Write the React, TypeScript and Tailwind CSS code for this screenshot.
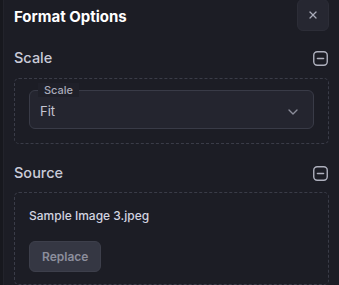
import { ChevronDown, X } from "lucide-react";

function MinusSquare() {
  return (
    <svg width="15" height="15" viewBox="0 0 15 15" fill="none" className="text-[#aeb0bd]">
      <rect x="0.75" y="0.75" width="13.5" height="13.5" rx="3.5" stroke="currentColor" strokeWidth="1.4" />
      <path d="M4.5 7.5h6" stroke="currentColor" strokeWidth="1.6" strokeLinecap="round" />
    </svg>
  );
}

function SectionHeader({ title }: { title: string }) {
  return (
    <div className="flex items-center justify-between h-[20px]">
      <span className="text-[14.5px] font-medium text-[#c9cbd8]">{title}</span>
      <button className="mr-[1px]">
        <MinusSquare />
      </button>
    </div>
  );
}

export default function App() {
  return (
    <main
      className="flex w-[339px] h-[285px] overflow-hidden bg-[#1c1d25]"
      style={{ fontFamily: "Inter, 'Noto Sans', sans-serif" }}
    >
      <div className="w-[4px] shrink-0 bg-[#17181e] border-r border-[#22232b]" />
      <div className="flex-1 flex flex-col pl-[10px] pr-[10px]">
        <div className="flex items-start justify-between h-[48px]">
          <h1 className="mt-[6px] text-[15px] font-bold text-white">Format Options</h1>
          <button className="mt-[-1px] w-[32px] h-[32px] rounded-md bg-[#262731] border border-[#2c2d37] flex items-center justify-center text-[#a9abb8]">
            <X size={12} strokeWidth={2.5} />
          </button>
        </div>

        <SectionHeader title="Scale" />
        <div className="mt-[10px] h-[66px] rounded-[5px] border border-dashed border-[#3a3c48] px-[14px] pt-[11px]">
          <div className="relative h-[39px] rounded-md border border-[#393b47] bg-[#24252f] flex items-center justify-between pl-[10px] pr-[12px] pt-[4px]">
            <span className="absolute left-[8px] top-[-8px] px-[6px] text-[11px] font-medium leading-[14px] text-[#a9abba] bg-[#1f2029]">
              Scale
            </span>
            <span className="text-[13px] text-[#c4c6d2]">Fit</span>
            <ChevronDown size={16} className="text-[#8b8d9a]" />
          </div>
        </div>

        <div className="mt-[19px]">
          <SectionHeader title="Source" />
        </div>
        <div className="mt-[9px] flex-1 rounded-[5px] border border-dashed border-[#3a3c48] px-[14px] pt-[14px]">
          <div className="text-[12px] font-medium text-[#d2d4e0]">Sample Image 3.jpeg</div>
          <button className="mt-[16px] h-[31px] px-[12px] rounded-md bg-[#353743] border border-[#3d3f4b] text-[12px] font-semibold text-[#8c8e9c]">
            Replace
          </button>
        </div>
      </div>
    </main>
  );
}
